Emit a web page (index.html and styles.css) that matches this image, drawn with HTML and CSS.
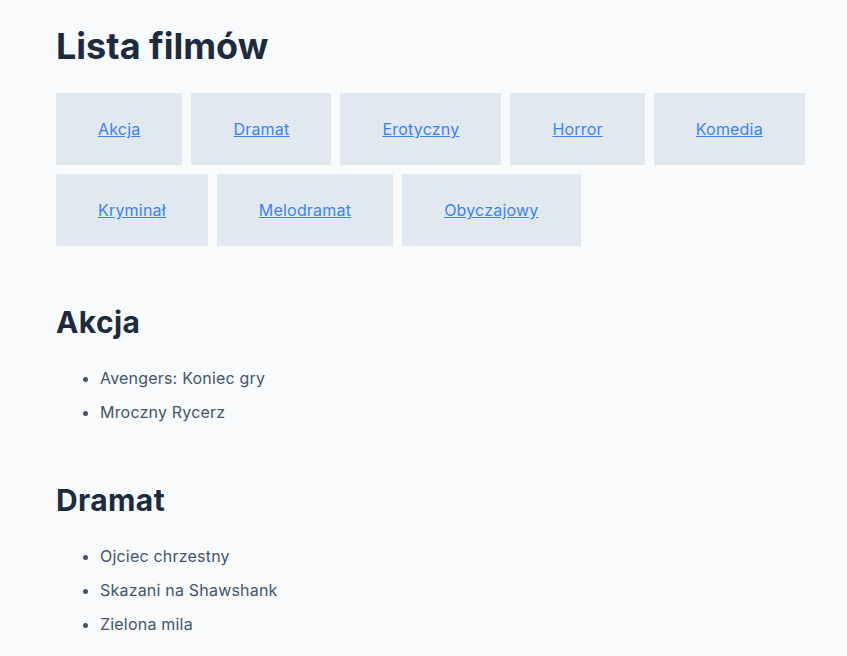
FILE: index.html
```html
<!DOCTYPE html>
<html lang="pl">
<head>
  <meta charset="UTF-8" />
  <meta name="viewport" content="width=device-width, initial-scale=1.0"/>
  <title>Lista filmów</title>
  <link rel="stylesheet" href="styles.css">
</head>
<body>
  <div class="page">
    <h1>Lista filmów</h1>

    <nav class="genres">
      <a href="#akcja">Akcja</a>
      <a href="#dramat">Dramat</a>
      <a href="#erotyczny">Erotyczny</a>
      <a href="#horror">Horror</a>
      <a href="#komedia">Komedia</a>
      <a href="#kryminal">Kryminał</a>
      <a href="#melodramat">Melodramat</a>
      <a href="#obyczajowy">Obyczajowy</a>
    </nav>

    <section class="genre" id="akcja">
      <h2>Akcja</h2>
      <ul>
        <li>Avengers: Koniec gry</li>
        <li>Mroczny Rycerz</li>
      </ul>
    </section>

    <section class="genre" id="dramat">
      <h2>Dramat</h2>
      <ul>
        <li>Ojciec chrzestny</li>
        <li>Skazani na Shawshank</li>
        <li>Zielona mila</li>
      </ul>
    </section>
  </div>
</body>
</html>
```

FILE: styles.css
```css
body {
  font-family: Inter, "Noto Sans", sans-serif;
  margin: 0;
  background: #f8fafc;
  color: #1c2b3e;
}
.page {
  padding: 24px 32px 0 56px;
}
h1 {
  font-size: 36px;
  font-weight: 700;
  line-height: 44px;
  margin: 0 0 25px;
}
.genres {
  display: flex;
  flex-wrap: wrap;
  gap: 9px;
  margin-bottom: 58px;
}
.genres a {
  display: block;
  background: #e2e8f0;
  color: #3b82f6;
  padding: 24px 42px;
  font-size: 16px;
  line-height: 24px;
  letter-spacing: 0.2px;
}
.genre h2 {
  font-size: 30px;
  font-weight: 700;
  line-height: 36px;
  letter-spacing: 0.4px;
  margin: 0 0 26px;
}
.genre ul {
  margin: 0 0 58px;
  padding-left: 44px;
  color: #44546a;
}
.genre:last-child ul {
  margin-bottom: 0;
}
.genre li {
  font-size: 16px;
  line-height: 24px;
  letter-spacing: 0.2px;
  margin-bottom: 10px;
}
.genre li:last-child {
  margin-bottom: 0;
}
```
